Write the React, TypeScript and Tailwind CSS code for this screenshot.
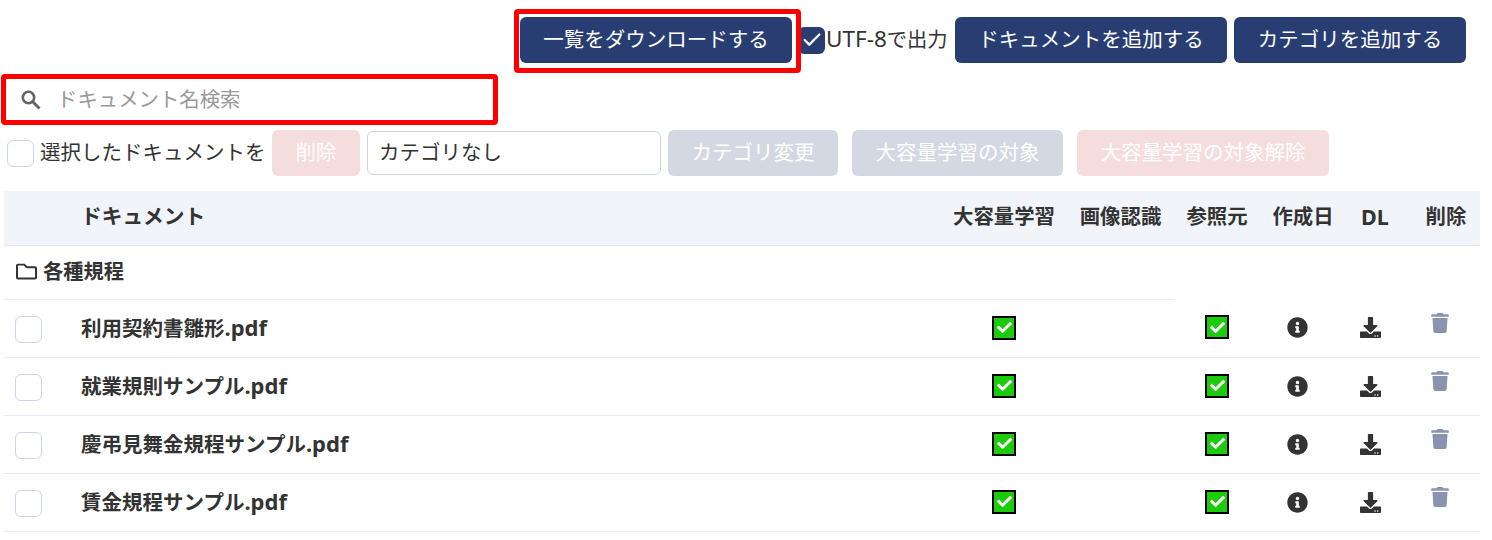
import React from 'react';
import { Check } from 'lucide-react';
import { FaCheck, FaDownload, FaInfoCircle, FaRegFolder, FaTrash } from 'react-icons/fa';

const documents = ['利用契約書雛形', '就業規則サンプル', '慶弔見舞金規程サンプル', '賃金規程サンプル'];

const primaryButton =
  'flex h-[46px] items-center justify-center rounded-md bg-[#283e72] pb-[2px] text-[20.5px] text-white';

const GreenCheck = () => (
  <span className="mx-auto mb-px flex h-6 w-6 items-center justify-center border-2 border-black bg-[#1ccb0c]">
    <FaCheck className="text-[15px] text-white" />
  </span>
);

const RowCheckbox = () => (
  <span className="block h-[27px] w-[27px] rounded-md border border-[#c9d6e8] bg-white" />
);

const App = () => {
  return (
    <div
      className="h-[540px] w-[1492px] overflow-hidden bg-white text-[#333]"
      style={{ fontFamily: '"Noto Sans", "Noto Sans CJK JP", sans-serif' }}
    >
      <div className="flex items-center justify-end pr-[26px] pt-[17px]">
        <div className={`relative w-[272px] ${primaryButton}`}>
          一覧をダウンロードする
          <span className="absolute -left-[6px] -top-[8px] z-10 h-[64px] w-[287px] rounded-sm border-[5px] border-[#ff0000]" />
        </div>
        <span className="ml-[6px] flex h-[27px] w-[27px] items-center justify-center rounded-md bg-[#283e72]">
          <Check className="h-[22px] w-[22px] text-white" strokeWidth={2.5} />
        </span>
        <span className="ml-px w-[129px] whitespace-nowrap pb-[2px] text-[20.3px] leading-none">
          <span className="text-[22.5px]">UTF-8</span>で出力
        </span>
        <div className={`w-[272px] ${primaryButton}`}>ドキュメントを追加する</div>
        <div className={`ml-[7px] w-[232px] ${primaryButton}`}>カテゴリを追加する</div>
      </div>

      <div className="relative ml-[4px] mt-[14px] flex h-[46px] w-[491px] items-center">
        <svg viewBox="0 0 20 20" fill="none" className="ml-[17px] h-5 w-5 text-[#666]" stroke="currentColor">
          <circle cx="7.5" cy="7.5" r="5.7" strokeWidth="2.6" />
          <path d="M12 12l6.5 6.5" strokeWidth="3" />
        </svg>
        <span className="ml-[16px] pb-[2px] text-[20.4px] text-[#999]">ドキュメント名検索</span>
        <span className="absolute -left-[3px] -top-[3px] z-10 h-[51px] w-[497px] rounded-sm border-[5px] border-[#ff0000]" />
      </div>

      <div className="ml-[7px] mt-[7px] flex h-[46px] items-center text-[20.5px]">
        <RowCheckbox />
        <span className="ml-[6px] w-[232px] pb-[2px]">選択したドキュメントを</span>
        <div className="flex h-[46px] w-[88px] items-center justify-center rounded-md bg-[#f5dcdd] pb-[2px] text-white">削除</div>
        <div className="ml-[7px] flex h-[44px] w-[294px] items-center rounded-md border border-[#c9d6e8] pb-[2px] pl-[11px]">カテゴリなし</div>
        <div className="ml-[7px] flex h-[46px] w-[170px] items-center justify-center rounded-md bg-[#d4d8e3] pb-[2px] text-white">カテゴリ変更</div>
        <div className="ml-[14px] flex h-[46px] w-[211px] items-center justify-center rounded-md bg-[#d4d8e3] pb-[2px] text-white">大容量学習の対象</div>
        <div className="ml-[14px] flex h-[46px] w-[252px] items-center justify-center rounded-md bg-[#f5dcdd] pb-[2px] text-white">大容量学習の対象解除</div>
      </div>

      <table className="ml-[4px] mt-[15px] w-[1476px] table-fixed border-collapse">
        <colgroup>
          <col className="w-[77px]" />
          <col className="w-[860px]" />
          <col className="w-[126px]" />
          <col className="w-[107px]" />
          <col className="w-[86px]" />
          <col className="w-[86px]" />
          <col className="w-[58px]" />
          <col className="w-[76px]" />
        </colgroup>
        <thead>
          <tr className="h-[54px] border-b border-[#e6e9f1] bg-[#f1f4f9] text-[20.4px] font-bold">
            <th />
            <th className="pb-[2px] text-left text-[20.7px] font-bold">ドキュメント</th>
            <th className="pb-[2px] font-bold">大容量学習</th>
            <th className="pb-[2px] font-bold">画像認識</th>
            <th className="pb-[2px] font-bold">参照元</th>
            <th className="pb-[2px] font-bold">作成日</th>
            <th className="pb-[2px] text-[21.5px] font-bold">DL</th>
            <th className="pb-[2px] pl-[8px] font-bold">削除</th>
          </tr>
        </thead>
        <tbody>
          <tr className="h-[54px]">
            <td colSpan={4} className="border-b border-[#e6e9f1] pb-[2px] pl-[11px] text-[20.3px] font-bold">
              <span className="flex items-center gap-[6px] pl-px">
                <FaRegFolder className="text-[21px]" />
                各種規程
              </span>
            </td>
            <td colSpan={4} />
          </tr>
          {documents.map((name) => (
            <tr key={name} className="h-[58px] border-b border-[#e6e9f1]">
              <td className="pl-[11px] pt-[2px]">
                <RowCheckbox />
              </td>
              <td className="pb-[2px] text-[20.5px] font-bold">
                {name}
                <span className="text-[22px]">.pdf</span>
              </td>
              <td>
                <GreenCheck />
              </td>
              <td />
              <td>
                <GreenCheck />
              </td>
              <td className="pr-[12px]">
                <FaInfoCircle className="mx-auto text-[21px]" />
              </td>
              <td className="pr-[10px]">
                <FaDownload className="mx-auto text-[21px]" />
              </td>
              <td className="pr-[5px]">
                <FaTrash className="mx-auto mb-[10px] text-[20px] text-[#8a93b0]" />
              </td>
            </tr>
          ))}
        </tbody>
      </table>
    </div>
  );
};

export default App;
